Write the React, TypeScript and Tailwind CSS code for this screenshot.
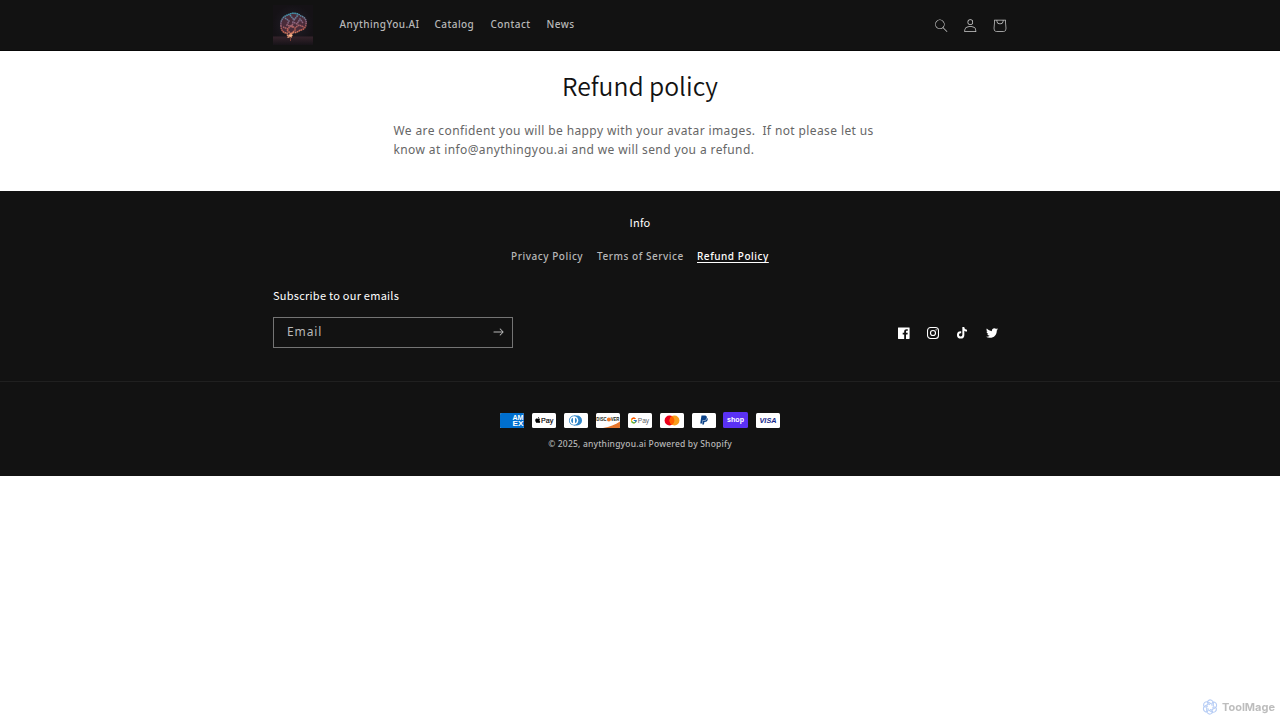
import React from "react";
import { FaApple, FaPaypal, FaTwitter } from "react-icons/fa";
import { FcGoogle } from "react-icons/fc";

const menu = [
  { name: "AnythingYou.AI", width: "w-[79px]" },
  { name: "Catalog", width: "w-[40px]" },
  { name: "Contact", width: "w-[40px]" },
  { name: "News", width: "w-[29px]" },
];

const BrainLogo: React.FC = () => (
  <svg viewBox="0 0 40 40" className="h-10 w-10">
    <defs>
      <radialGradient id="night">
        <stop offset="0" stopColor="#221f2a" />
        <stop offset="1" stopColor="#151216" />
      </radialGradient>
      <linearGradient id="brain" x1="0.4" y1="0" x2="0.5" y2="1">
        <stop offset="0" stopColor="#3f9fb8" />
        <stop offset="0.4" stopColor="#8a6480" />
        <stop offset="0.7" stopColor="#c4604f" />
        <stop offset="1" stopColor="#f0a57c" />
      </linearGradient>
      <linearGradient id="floor" x1="0" y1="0" x2="0" y2="1">
        <stop offset="0" stopColor="#35232b" />
        <stop offset="1" stopColor="#171318" />
      </linearGradient>
    </defs>
    <rect width="40" height="40" fill="url(#night)" />
    <rect y="31.500" width="40" height="8.500" fill="url(#floor)" />
    <path
      d="M8 21c-1-5 2-10 7-11 4-3 10-2 13 1 4 1 6 5 5 8 0 4-3 6-6 6-2 3-6 2-8 3l-1 4h-3l-1-4c-4 0-6-3-6-7z"
      fill="#4a2c3a"
    />
    <path
      d="M8 21c-1-5 2-10 7-11 4-3 10-2 13 1 4 1 6 5 5 8 0 4-3 6-6 6-2 3-6 2-8 3l-1 4h-3l-1-4c-4 0-6-3-6-7zM12 13l4 3-2 4 5 2 1-5 4 2 3-5 3 4M17 10l4 5 4-5M10 22l5 2 3-4 4 3 4-3 5 2M14 25l4 4 5-5"
      fill="none"
      stroke="url(#brain)"
      strokeWidth="1.500"
      strokeDasharray="1.600 .5"
    />
    <ellipse cx="17.500" cy="30.500" rx="2" ry="1.200" fill="#ffb98c" />
    <path d="M17.500 32v4" stroke="#7a4038" strokeWidth="1" />
  </svg>
);

const Header: React.FC = () => (
  <header className="h-[50.500px] border-b border-[#080808] bg-[#121212]">
    <div className="mx-auto flex h-[50px] w-[734px] items-center">
      <BrainLogo />
      <nav className="mb-[3px] ml-[26.500px] flex gap-4 whitespace-nowrap text-[10px] font-medium leading-[14px] tracking-[0.440px] text-[#b8b8b8]">
        {menu.map((item) => (
          <a key={item.name} href="#" className={item.width}>
            {item.name}
          </a>
        ))}
      </nav>
      <div className="-mr-[7.500px] ml-auto flex items-center pt-px text-[#cfcfcf]">
        <button className="flex w-[29.300px] justify-center">
          <svg viewBox="0 0 18 19" className="h-[13.300px]" fill="currentColor">
            <path
              fillRule="evenodd"
              d="M11.03 11.68A5.784 5.784 0 112.85 3.5a5.784 5.784 0 018.18 8.18zm.26 1.12a6.78 6.78 0 11.72-.7l5.4 5.4a.5.5 0 11-.71.7l-5.41-5.4z"
            />
          </svg>
        </button>
        <button className="flex w-[29.300px] justify-center">
          <svg viewBox="0 0 18 19" className="h-[13.300px]" fill="currentColor">
            <path
              fillRule="evenodd"
              d="M6 4.5a3 3 0 116 0 3 3 0 01-6 0zm3-4a4 4 0 100 8 4 4 0 000-8zm5.58 12.15c1.12.82 1.83 2.24 1.91 4.85H1.51c.08-2.6.79-4.03 1.9-4.85C4.66 11.75 6.5 11.5 9 11.5s4.35.26 5.58 1.15zM9 10.5c-2.5 0-4.65.24-6.17 1.35C1.27 12.98.5 14.93.5 18v.5h17V18c0-3.07-.77-5.02-2.33-6.15-1.52-1.1-3.67-1.35-6.17-1.35z"
            />
          </svg>
        </button>
        <button className="w-[29.300px]">
          <svg viewBox="0 0 40 40" className="h-[29.300px] w-[29.300px]" fill="currentColor">
            <path
              fillRule="evenodd"
              d="M15.75 11.8h-3.16l-.77 11.6a5 5 0 0 0 4.99 5.34h7.38a5 5 0 0 0 4.99-5.33l-.78-11.61zm0 1h-2.22l-.71 10.67a4 4 0 0 0 3.99 4.27h7.38a4 4 0 0 0 4-4.27l-.72-10.67h-2.22v.63a4.75 4.75 0 1 1-9.5 0zm8.5 0h-7.5v.63a3.75 3.75 0 1 0 7.5 0z"
            />
          </svg>
        </button>
      </div>
    </div>
  </header>
);

const Social: React.FC = () => (
  <div className="flex items-center text-white">
    <a href="#" className="flex w-[29.300px] justify-center">
      <svg viewBox="0 0 18 18" className="h-3 w-3" fill="currentColor">
        <path d="M16.42.61c.27 0 .5.1.69.28.19.2.28.42.28.7v15.44c0 .27-.1.5-.28.69a.94.94 0 01-.7.28h-4.39v-6.7h2.25l.31-2.65h-2.56v-1.7c0-.4.1-.72.28-.93.18-.2.5-.32 1-.32h1.37V3.35c-.6-.06-1.27-.1-2.01-.1-1.01 0-1.83.3-2.45.9-.62.6-.93 1.44-.93 2.53v1.97H7.04v2.65h2.24V18H.98c-.28 0-.5-.1-.7-.28a.94.94 0 01-.28-.7V1.59c0-.27.1-.5.28-.69a.94.94 0 01.7-.28h15.44z" />
      </svg>
    </a>
    <a href="#" className="flex w-[29.300px] justify-center pr-px">
      <svg viewBox="0 0 18 18" className="h-3 w-3" fill="none" stroke="currentColor">
        <rect x=".8" y=".8" width="16.400" height="16.400" rx="4.500" strokeWidth="1.600" />
        <circle cx="9" cy="9" r="3.800" strokeWidth="1.700" />
        <circle cx="13.700" cy="4.300" r="1" fill="currentColor" stroke="none" />
      </svg>
    </a>
    <a href="#" className="flex w-[29.300px] justify-center pr-[2px]">
      <svg viewBox="0 0 16 18" className="h-3" fill="currentColor">
        <path d="M8.02 0H11s-.17 3.82 4.13 4.1v2.95s-2.3.14-4.13-1.26l.03 6.1a5.52 5.52 0 11-5.51-5.52h.77V9.4a2.5 2.5 0 101.76 2.4L8.02 0z" />
      </svg>
    </a>
    <a href="#" className="flex w-[29.300px] justify-center pt-px">
      <FaTwitter size={12} />
    </a>
  </div>
);

const card = "flex h-[15px] w-6 items-center justify-center overflow-hidden rounded-[1.500px] bg-white";

const Payments: React.FC = () => (
  <ul className="flex items-center justify-center gap-2">
    <li className={card}>
      <svg viewBox="0 0 24 15" className="h-full w-full">
        <path d="M0 0h24v15H0z" fill="#006fcf" />
        <g fill="#fff" fontFamily="Liberation Sans" fontWeight="bold" fontSize="7">
          <text x="12.500" y="7" textLength="11" lengthAdjust="spacingAndGlyphs">AM</text>
          <text x="12.500" y="13" textLength="11" lengthAdjust="spacingAndGlyphs">EX</text>
        </g>
      </svg>
    </li>
    <li className={card}>
      <svg viewBox="0 0 24 15" className="h-full w-full">
        <FaApple x="2.300" y="3.500" size={7} color="#000" />
        <text x="9" y="10" fontFamily="Liberation Sans" fontSize="7.500" stroke="#000" strokeWidth=".15" textLength="12.300" lengthAdjust="spacingAndGlyphs">Pay</text>
      </svg>
    </li>
    <li className={card}>
      <svg viewBox="0 0 24 15" className="h-full w-full">
        <path d="M10 2.500h3a5 5 0 010 10h-3z" fill="#3086c8" />
        <circle cx="10" cy="7.500" r="5" fill="#3086c8" />
        <circle cx="10" cy="7.500" r="4.300" fill="#fff" />
        <path d="M9 4.700v5.600a3 3 0 010-5.600zM11 4.700v5.600a3 3 0 000-5.600z" fill="#3086c8" />
      </svg>
    </li>
    <li className={card}>
      <svg viewBox="0 0 24 15" className="h-full w-full">
        <path d="M24 8.500V15H7c7-1.300 12-3.300 17-6.500z" fill="#e6772e" />
        <g transform="scale(.76 1)" fill="#231f20" fontFamily="Liberation Sans" fontWeight="bold" fontSize="5.600">
          <text x=".5" y="8.400">DISC</text>
          <text x="19.300" y="8.400">VER</text>
        </g>
        <circle cx="12.900" cy="6.400" r="2" fill="#ee7623" />
      </svg>
    </li>
    <li className={card}>
      <svg viewBox="0 0 24 15" className="h-full w-full">
        <FcGoogle x="2.300" y="4" size={7} />
        <text x="9.700" y="10" fill="#5f6368" fontFamily="Liberation Sans" fontSize="6.800" textLength="11.500" lengthAdjust="spacingAndGlyphs">Pay</text>
      </svg>
    </li>
    <li className={card}>
      <svg viewBox="0 0 24 15" className="h-full w-full">
        <circle cx="9.500" cy="7.500" r="4.900" fill="#eb001b" />
        <circle cx="14.500" cy="7.500" r="4.900" fill="#f79e1b" />
        <path d="M12 3.300a4.900 4.900 0 010 8.400 4.900 4.900 0 010-8.400z" fill="#ff5f00" />
      </svg>
    </li>
    <li className={card}>
      <FaPaypal size={10} color="#0c4389" />
    </li>
    <li className="-ml-px flex h-4 w-[25px] overflow-hidden rounded-[1.500px] bg-[#5a31f4]">
      <svg viewBox="0 0 25 16" className="h-full w-full">
        <text x="4" y="10" fill="#fff" fontFamily="Liberation Sans" fontWeight="bold" fontSize="7.800" textLength="17" lengthAdjust="spacingAndGlyphs">shop</text>
      </svg>
    </li>
    <li className={card}>
      <svg viewBox="0 0 24 15" className="h-full w-full">
        <text x="3.500" y="10.300" fill="#142688" fontFamily="Liberation Sans" fontWeight="bold" fontStyle="italic" fontSize="7.500" textLength="17" lengthAdjust="spacingAndGlyphs">VISA</text>
      </svg>
    </li>
  </ul>
);

const Footer: React.FC = () => (
  <footer className="h-[285px] bg-[#121212] text-[#b8b8b8]">
    <div className="mx-auto flex h-[190px] w-[734px] flex-col pt-[23px]">
      <h2 className="text-center font-['Noto_Sans_CJK_SC',sans-serif] text-[11px] leading-4 tracking-[0.250px] text-white">
        Info
      </h2>
      <ul className="mt-[19px] flex justify-center gap-[13px] whitespace-nowrap text-[10px] font-medium leading-[14px] tracking-[0.540px]">
        <li className="w-[73px]">Privacy Policy</li>
        <li className="w-[87px]">Terms of Service</li>
        <li className="w-[72px] text-white underline underline-offset-2">Refund Policy</li>
      </ul>
      <div className="mt-[24px] flex justify-between">
        <div>
          <h2 className="font-['Noto_Sans_CJK_SC',sans-serif] text-[11px] leading-4 tracking-[0.250px] text-white">
            Subscribe to our emails
          </h2>
          <div className="mt-[14px] flex h-[31px] w-[240px] items-center justify-between border border-[#747474] pl-[13px] pr-2">
            <span className="pb-[2px] text-[12px] leading-4 tracking-[0.900px]">Email</span>
            <svg viewBox="0 0 14 10" className="mb-px h-[8px] w-[11px]" fill="currentColor">
              <path
                fillRule="evenodd"
                d="M8.537.808a.5.5 0 01.817-.162l4 4a.5.5 0 010 .708l-4 4a.5.5 0 11-.708-.708L11.793 5.5H1a.5.5 0 010-1h10.793L8.646 1.354a.5.5 0 01-.109-.546z"
              />
            </svg>
          </div>
        </div>
        <div className="mt-[39px]">
          <Social />
        </div>
      </div>
    </div>
    <div className="border-t border-[#202020] pt-[30px]">
      <Payments />
      <p className="mt-[10px] text-center text-[8.500px] font-medium leading-3 tracking-[0.190px]">
        © 2025, anythingyou.ai Powered by Shopify
      </p>
    </div>
  </footer>
);

const Watermark: React.FC = () => (
  <div className="fixed bottom-1 right-[5px] flex items-center gap-1 text-[#bdbdbd]">
    <svg viewBox="0 0 16 16" className="h-4 w-4" fill="none" stroke="#b7cdf5" strokeWidth="1.100">
      {[0, 60, 120, 180, 240, 300].map((deg) => (
        <path key={deg} transform={`rotate(${deg} 8 8)`} d="M8 5.500C5.500 5.200 4.700 3 6.300 1.600c2-1.500 4.700-.3 5 2.200v4" />
      ))}
    </svg>
    <span className="font-['Inter',sans-serif] text-[11px] font-bold leading-[18px]">ToolMage</span>
  </div>
);

const App: React.FC = () => {
  return (
    <div className="h-[720px] overflow-hidden bg-white font-['Noto_Sans',sans-serif]">
      <Header />
      <main className="mx-auto h-[140.500px] w-[493px] pt-[16px]">
        <h1 className="text-center font-['Noto_Sans_CJK_SC',sans-serif] text-[24.700px] font-[350] leading-9 text-[#121212]">
          Refund policy
        </h1>
        <div className="mt-[18px] whitespace-pre text-[12px] leading-[19px] tracking-[0.390px] text-[#666]">
          <p>We are confident you will be happy with your avatar images.  If not please let us</p>
          <p>know at info@anythingyou.ai and we will send you a refund.</p>
        </div>
      </main>
      <Footer />
      <Watermark />
    </div>
  );
};

export default App;
